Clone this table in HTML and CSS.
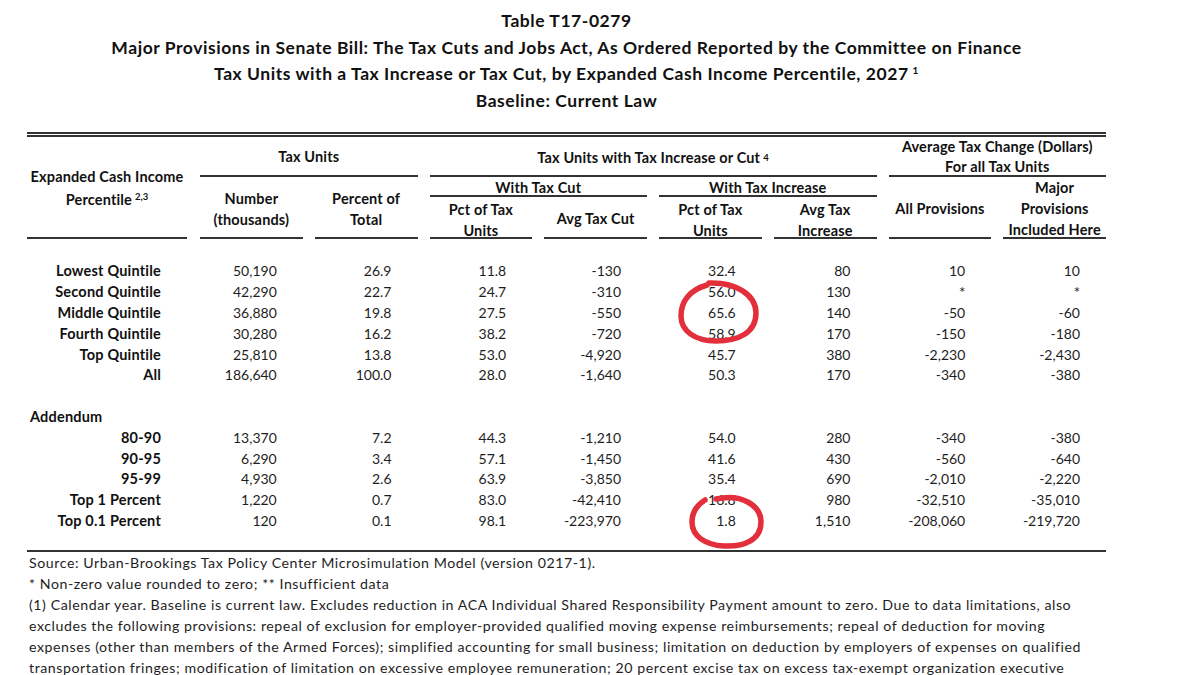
FILE: index.html
```html
<!DOCTYPE html>
<html>
<head>
<meta charset="utf-8">
<link rel="stylesheet" href="styles.css">
</head>
<body>
<div class="page">
  <div class="titles">
    <div class="t-line">Table T17-0279</div>
    <div class="t-line">Major Provisions in Senate Bill: The Tax Cuts and Jobs Act, As Ordered Reported by the Committee on Finance</div>
    <div class="t-line">Tax Units with a Tax Increase or Tax Cut, by Expanded Cash Income Percentile, 2027<sup class="t-sup">1</sup></div>
    <div class="t-line">Baseline: Current Law</div>
  </div>

  <div class="table">
    <div class="head">
      <div class="hc h-label"><span>Expanded Cash Income<br>Percentile<sup class="h-sup">2,3</sup></span></div>
      <div class="hc h-units">Tax Units</div>
      <div class="hc h-change">Tax Units with Tax Increase or Cut<sup class="h-sup">4</sup></div>
      <div class="hc h-avg">Average Tax Change (Dollars)<br>For all Tax Units</div>
      <div class="hc h-number">Number<br>(thousands)</div>
      <div class="hc h-percent">Percent of<br>Total</div>
      <div class="hc h-cut">With Tax Cut</div>
      <div class="hc h-inc">With Tax Increase</div>
      <div class="hc h-pct1">Pct of Tax<br>Units</div>
      <div class="hc h-avgcut">Avg Tax Cut</div>
      <div class="hc h-pct2">Pct of Tax<br>Units</div>
      <div class="hc h-avginc">Avg Tax<br>Increase</div>
      <div class="hc h-all">All Provisions</div>
      <div class="hc h-major">Major<br>Provisions<br>Included Here</div>
    </div>

    <div class="body">
      <div class="row"><div class="lbl">Lowest Quintile</div><div class="num">50,190</div><div class="num">26.9</div><div class="num">11.8</div><div class="num">-130</div><div class="num">32.4</div><div class="num">80</div><div class="num">10</div><div class="num">10</div></div>
      <div class="row"><div class="lbl">Second Quintile</div><div class="num">42,290</div><div class="num">22.7</div><div class="num">24.7</div><div class="num">-310</div><div class="num">56.0</div><div class="num">130</div><div class="num star">*</div><div class="num star">*</div></div>
      <div class="row"><div class="lbl">Middle Quintile</div><div class="num">36,880</div><div class="num">19.8</div><div class="num">27.5</div><div class="num">-550</div><div class="num">65.6</div><div class="num">140</div><div class="num">-50</div><div class="num">-60</div></div>
      <div class="row"><div class="lbl">Fourth Quintile</div><div class="num">30,280</div><div class="num">16.2</div><div class="num">38.2</div><div class="num">-720</div><div class="num">58.9</div><div class="num">170</div><div class="num">-150</div><div class="num">-180</div></div>
      <div class="row"><div class="lbl">Top Quintile</div><div class="num">25,810</div><div class="num">13.8</div><div class="num">53.0</div><div class="num">-4,920</div><div class="num">45.7</div><div class="num">380</div><div class="num">-2,230</div><div class="num">-2,430</div></div>
      <div class="row"><div class="lbl">All</div><div class="num">186,640</div><div class="num">100.0</div><div class="num">28.0</div><div class="num">-1,640</div><div class="num">50.3</div><div class="num">170</div><div class="num">-340</div><div class="num">-380</div></div>
      <div class="row spacer"></div>
      <div class="row"><div class="section">Addendum</div></div>
      <div class="row"><div class="lbl">80-90</div><div class="num">13,370</div><div class="num">7.2</div><div class="num">44.3</div><div class="num">-1,210</div><div class="num">54.0</div><div class="num">280</div><div class="num">-340</div><div class="num">-380</div></div>
      <div class="row"><div class="lbl">90-95</div><div class="num">6,290</div><div class="num">3.4</div><div class="num">57.1</div><div class="num">-1,450</div><div class="num">41.6</div><div class="num">430</div><div class="num">-560</div><div class="num">-640</div></div>
      <div class="row"><div class="lbl">95-99</div><div class="num">4,930</div><div class="num">2.6</div><div class="num">63.9</div><div class="num">-3,850</div><div class="num">35.4</div><div class="num">690</div><div class="num">-2,010</div><div class="num">-2,220</div></div>
      <div class="row"><div class="lbl">Top 1 Percent</div><div class="num">1,220</div><div class="num">0.7</div><div class="num">83.0</div><div class="num">-42,410</div><div class="num">16.8</div><div class="num">980</div><div class="num">-32,510</div><div class="num">-35,010</div></div>
      <div class="row"><div class="lbl">Top 0.1 Percent</div><div class="num">120</div><div class="num">0.1</div><div class="num">98.1</div><div class="num">-223,970</div><div class="num">1.8</div><div class="num">1,510</div><div class="num">-208,060</div><div class="num">-219,720</div></div>
    </div>
  </div>

  <div class="notes">
    <div class="n-line">Source: Urban-Brookings Tax Policy Center Microsimulation Model (version 0217-1).</div>
    <div class="n-line">* Non-zero value rounded to zero; ** Insufficient data</div>
    <div class="n-line">(1) Calendar year. Baseline is current law. Excludes reduction in ACA Individual Shared Responsibility Payment amount to zero. Due to data limitations, also</div>
    <div class="n-line">excludes the following provisions: repeal of exclusion for employer-provided qualified moving expense reimbursements; repeal of deduction for moving</div>
    <div class="n-line">expenses (other than members of the Armed Forces); simplified accounting for small business; limitation on deduction by employers of expenses on qualified</div>
    <div class="n-line">transportation fringes; modification of limitation on excessive employee remuneration; 20 percent excise tax on excess tax-exempt organization executive</div>
  </div>

  <svg class="marks" width="1200" height="675" viewBox="0 0 1200 675">
    <path d="M709 283 C 736 282, 756 295, 756 313 C 756 333, 738 341, 716 341 C 695 341, 681 331, 681 316 C 681 301, 690 290, 707 285" />
    <path d="M716 499 C 742 493, 761 506, 761 522 C 761 540, 744 547, 724 546 C 705 545, 692 536, 692 522 C 692 512, 697 505, 705 500" />
  </svg>
</div>
</body>
</html>
```

FILE: styles.css
```css
html, body {
  margin: 0;
  padding: 0;
  background: #ffffff;
}

body {
  font-family: Lato, "Open Sans", "Liberation Sans", sans-serif;
  color: #1e1e1e;
}

.page {
  position: relative;
  width: 1200px;
  height: 675px;
  overflow: hidden;
  padding-left: 27px;
  box-sizing: border-box;
}

.titles {
  width: 1079px;
  padding-top: 8px;
  text-align: center;
  font-weight: 700;
  font-size: 17.5px;
  letter-spacing: 0.55px;
  color: #111;
}

.t-line {
  line-height: 26.6px;
  height: 26.6px;
  white-space: nowrap;
}

.t-sup {
  font-size: 10px;
  vertical-align: 6px;
  line-height: 0;
  margin-left: 4px;
}

.table {
  width: 1079px;
  margin-top: 18px;
  border-top: 5px double #333;
  border-bottom: 2px solid #333;
}

.head {
  display: grid;
  grid-template-columns: 161px repeat(8, 114.75px);
  grid-template-rows: 40px 20px 42px;
  font-weight: 700;
  font-size: 14.5px;
  letter-spacing: 0.15px;
  line-height: 21px;
  color: #111;
}

.hc {
  display: flex;
  align-items: center;
  justify-content: center;
  text-align: center;
  margin-left: 12px;
  border-bottom: 2px solid #333;
  white-space: nowrap;
  box-sizing: border-box;
}

.h-sup {
  font-size: 9.5px;
  vertical-align: 5px;
  line-height: 0;
  margin-left: 3px;
  letter-spacing: 0;
}

.h-label { grid-column: 1; grid-row: 1 / 4; margin-left: 0; margin-right: 1px; }
.h-label span { line-height: 23px; padding-top: 2px; }
.h-units { grid-column: 2 / 4; grid-row: 1; }
.h-change { grid-column: 4 / 8; grid-row: 1; padding-top: 3px; }
.h-avg { grid-column: 8 / 10; grid-row: 1; line-height: 20px; padding-top: 1px; }
.h-number { grid-column: 2; grid-row: 2 / 4; padding-top: 4px; }
.h-percent { grid-column: 3; grid-row: 2 / 4; padding-top: 4px; }
.h-cut { grid-column: 4 / 6; grid-row: 2; padding-top: 3px; }
.h-inc { grid-column: 6 / 8; grid-row: 2; padding-top: 3px; }
.h-pct1 { grid-column: 4; grid-row: 3; align-items: flex-start; padding-top: 1.5px; }
.h-avgcut { grid-column: 5; grid-row: 3; padding-top: 3px; }
.h-pct2 { grid-column: 6; grid-row: 3; align-items: flex-start; padding-top: 1.5px; }
.h-avginc { grid-column: 7; grid-row: 3; align-items: flex-start; padding-top: 1.5px; }
.h-all { grid-column: 8; grid-row: 2 / 4; padding-top: 3px; }
.h-major { grid-column: 9; grid-row: 2 / 4; align-items: flex-start; padding-top: 0; }

.body {
  padding-top: 22px;
  padding-bottom: 18px;
  font-size: 14px;
}

.row {
  display: grid;
  grid-template-columns: 161px repeat(8, 114.75px);
  height: 20.8px;
  line-height: 20.8px;
}

.lbl {
  text-align: right;
  padding-right: 27px;
  font-weight: 700;
  font-size: 14.5px;
  letter-spacing: 0.2px;
  color: #111;
  white-space: nowrap;
}

.section {
  grid-column: 1 / 3;
  padding-left: 3px;
  font-weight: 700;
  font-size: 14.5px;
  letter-spacing: 0.2px;
  color: #111;
}

.num {
  text-align: right;
  padding-right: 26px;
  white-space: nowrap;
}

.star {
  font-size: 15px;
}

.notes {
  width: 1120px;
  padding-left: 2px;
  font-size: 14.2px;
  letter-spacing: 0.55px;
  color: #1e1e1e;
}

.n-line {
  line-height: 21px;
  height: 21px;
  white-space: nowrap;
}

.marks {
  position: absolute;
  left: 0;
  top: 0;
  pointer-events: none;
}

.marks path {
  fill: none;
  stroke: #e32f3b;
  stroke-width: 5.5;
  stroke-linecap: round;
  stroke-linejoin: round;
}
```
